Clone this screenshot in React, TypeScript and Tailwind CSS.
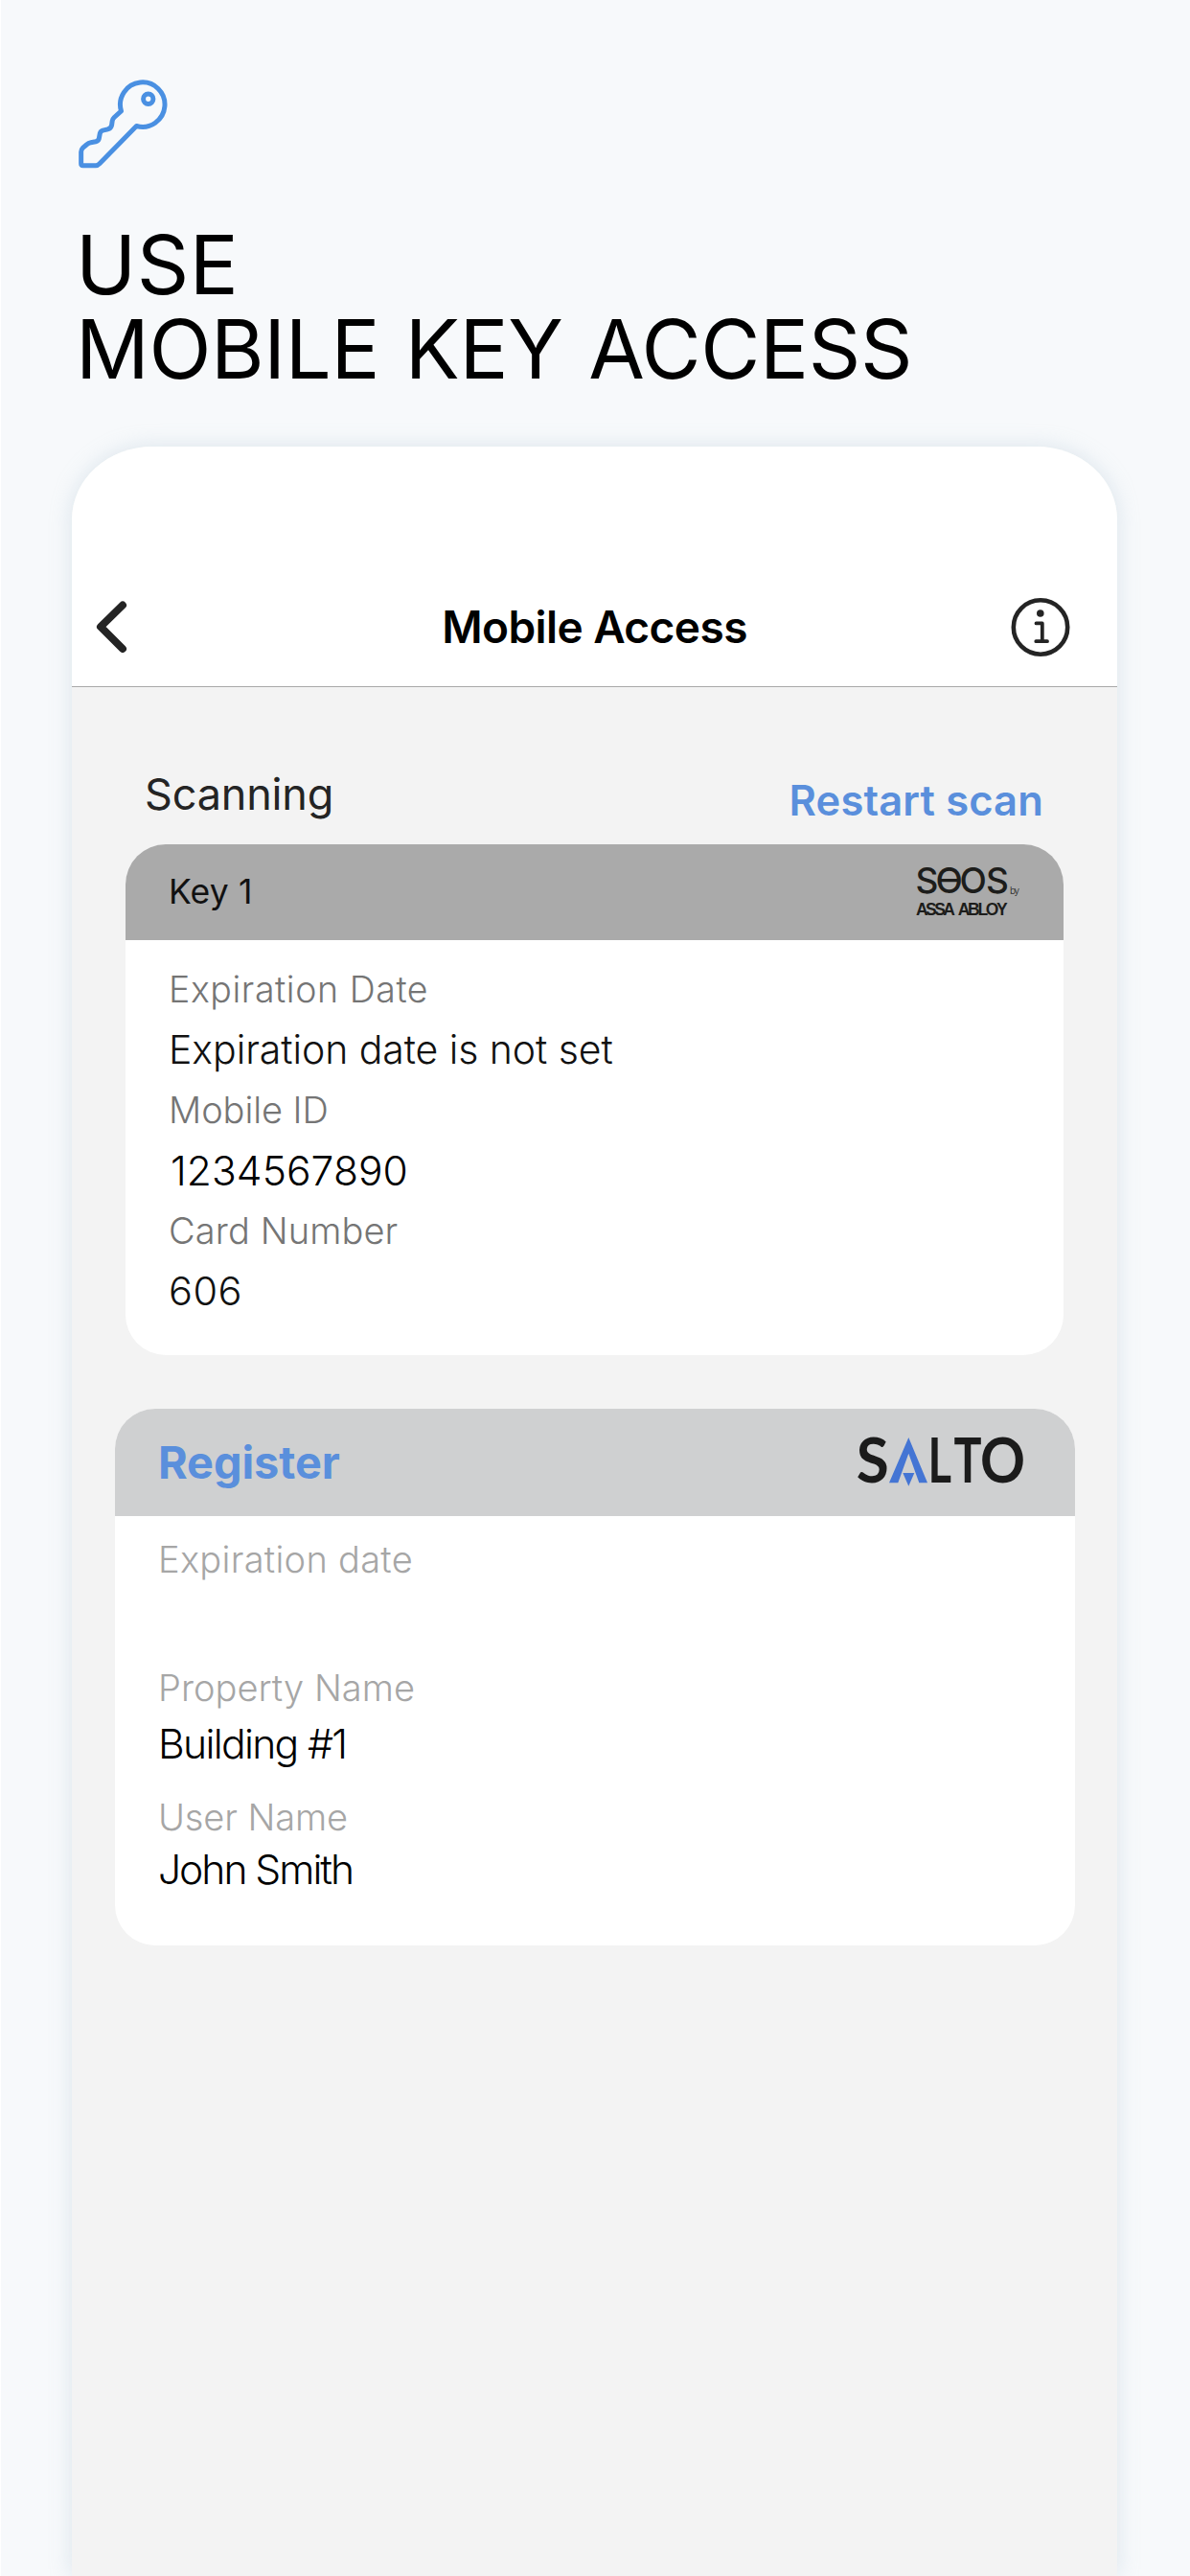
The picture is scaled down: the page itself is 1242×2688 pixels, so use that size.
import type { ReactNode } from 'react'

function KeyIcon() {
  return (
    <svg
      viewBox="0 0 280 280"
      className="w-[93px] h-[93px]"
      fill="none"
      stroke="#4a90e2"
      strokeWidth="15"
      strokeLinejoin="round"
    >
      <path d="M134 99A70 70 0 1 1 182 146L66 264Q60 270 54 270H14Q8 270 8 264V227Q8 220 13 215L26 204Q31 199 38 198L54 195Q62 193 64 186L67 170Q69 162 76 160L92 156Q102 154 104 144L106 130Q107 124 112 119Z" />
      <circle cx="219" cy="61" r="15.5" />
    </svg>
  )
}

function BackIcon() {
  return (
    <svg
      viewBox="0 0 36 58"
      className="w-9 h-[58px]"
      fill="none"
      stroke="#242424"
      strokeWidth="8"
      strokeLinecap="round"
      strokeLinejoin="round"
    >
      <path d="M30 6.5L7 29L30 52" />
    </svg>
  )
}

function InfoIcon() {
  return (
    <svg viewBox="0 0 64 64" className="w-16 h-16" fill="none" stroke="#242424" strokeLinecap="round" strokeLinejoin="round">
      <circle cx="32" cy="32.5" r="28.2" strokeWidth="4.6" />
      <path d="M27.5 28.4H33.8V47.2M27.3 47.2H39" strokeWidth="3.8" />
      <circle cx="31.8" cy="18" r="3.8" fill="#242424" stroke="none" />
    </svg>
  )
}

function SeosLogo() {
  return (
    <svg viewBox="0 0 112 62" className="w-28 h-[62px] overflow-visible" fill="#1d1d1b">
      <text x="2.4 23.4 48.6 76" y="32.2" className="font-['Inter',sans-serif] font-medium text-[37px]">
        SƟOS
      </text>
      <text x="101" y="33" textLength="10" className="font-['Inter',sans-serif] font-light text-[10px]">
        by
      </text>
      <g className="font-['Liberation_Sans',sans-serif] font-bold text-[17.5px]">
        <text x="3" y="55" textLength="41" lengthAdjust="spacing">ASSA</text>
        <text x="46.8" y="55" textLength="52" lengthAdjust="spacing">ABLOY</text>
      </g>
    </svg>
  )
}

function SaltoLogo() {
  return (
    <svg viewBox="0 0 178 60" className="w-[178px] h-[60px] overflow-visible" fill="#1b1b1b">
      <g className="font-['Lato',sans-serif] font-bold text-[64.4px]">
        <text x="0.8" y="51" textLength="34" lengthAdjust="spacingAndGlyphs">S</text>
        <text x="75.6" y="51" textLength="24.5" lengthAdjust="spacingAndGlyphs">L</text>
        <text x="102.5" y="51" textLength="29" lengthAdjust="spacingAndGlyphs">T</text>
        <text x="130" y="51" textLength="47" lengthAdjust="spacingAndGlyphs">O</text>
      </g>
      <path d="M55.3 4L75 51.3H66.3L55.3 20.7L44.3 51.3H35Z" fill="#4475d4" />
      <path d="M49.3 41H61.3L55.3 54.7Z" fill="#4475d4" />
    </svg>
  )
}

function Card({ header, children, className }: { header: ReactNode; children: ReactNode; className: string }) {
  return (
    <section className={`bg-white rounded-[42px] overflow-hidden ${className}`}>
      {header}
      {children}
    </section>
  )
}

export default function App() {
  return (
    <main className="flex flex-col h-[2688px] overflow-hidden bg-[#f7f9fb] border-l border-white text-black font-['Inter',sans-serif]">
      <div className="pl-[81px] pt-[83px]">
        <KeyIcon />
      </div>
      <h1 className="mt-[57px] ml-[78px] text-[85px] leading-[88px] tracking-[-0.35px] [word-spacing:3px] whitespace-nowrap">
        <span className="tracking-[0.5px]">USE</span>
        <br />
        MOBILE KEY ACCESS
      </h1>

      {/* Phone screen */}
      <div className="mt-[57px] ml-[74px] w-[1091px] flex-1 flex flex-col rounded-t-[84px_76px] bg-[#f3f3f3] shadow-[0_0_22px_rgba(165,190,208,0.34)]">
        <header className="h-[251px] pt-[126px] grid grid-cols-[1fr_auto_1fr] items-center rounded-t-[84px_76px] bg-white border-b border-[#a9a9a9]">
          <button className="justify-self-start ml-[23px]">
            <BackIcon />
          </button>
          <h2 className="text-[46px] font-semibold tracking-[-0.57px]">Mobile Access</h2>
          <button className="justify-self-end mr-[48px]">
            <InfoIcon />
          </button>
        </header>

        <div className="pt-[84px] h-[164px] pl-[76px] pr-[77px] flex items-start justify-between">
          <span className="text-[45px] leading-[56px] tracking-[-0.18px] text-[#242424]">Scanning</span>
          <button className="mt-[6px] text-[43.5px] leading-[56px] font-semibold tracking-[0.15px] text-[#5a8fdc]">
            Restart scan
          </button>
        </div>

        <Card
          className="ml-14 w-[979px] h-[533px]"
          header={
            <div className="h-[100px] pl-[45px] pr-[45px] flex items-center justify-between bg-[#aaaaaa]">
              <span className="text-[35.5px] tracking-[0.15px] text-[#111111]">Key 1</span>
              <SeosLogo />
            </div>
          }
        >
          <dl className="pt-5 pl-[45px] leading-[63px] font-light">
            <dt className="text-[37.5px] tracking-[0.57px] text-[#757575]">Expiration Date</dt>
            <dd className="text-[41px] tracking-[-0.07px] text-[#111111]">Expiration date is not set</dd>
            <dt className="text-[38px] tracking-[-0.07px] text-[#757575]">Mobile ID</dt>
            <dd className="text-[42.5px] tracking-[0.09px] pl-0.5">1234567890</dd>
            <dt className="text-[38px] tracking-[0.11px] text-[#757575]">Card Number</dt>
            <dd className="text-[41.5px] tracking-[0.45px] text-[#111111]">606</dd>
          </dl>
        </Card>

        <Card
          className="mt-14 ml-[45px] w-[1002px] h-[560px]"
          header={
            <div className="h-28 pl-[45px] pr-[51px] flex items-center justify-between bg-[#cfd0d1]">
              <button className="text-[46.8px] font-bold tracking-[-0.05px] text-[#5a8fdc]">Register</button>
              <SaltoLogo />
            </div>
          }
        >
          <dl className="pt-[17px] pl-[45px] leading-[56px] font-light">
            <dt className="text-[38px] tracking-[0.29px] text-[#a6a6a6]">Expiration date</dt>
            <dd className="h-[78px]" />
            <dt className="text-[38px] tracking-[0.05px] text-[#a6a6a6]">Property Name</dt>
            <dd className="mt-[3px] mb-5 text-[42.6px] tracking-[-1.67px]">Building #1</dd>
            <dt className="text-[38px] tracking-[-0.1px] text-[#a6a6a6]">User Name</dt>
            <dd className="-mt-px text-[42.6px] tracking-[-2.03px]">John Smith</dd>
          </dl>
        </Card>
      </div>
    </main>
  )
}
